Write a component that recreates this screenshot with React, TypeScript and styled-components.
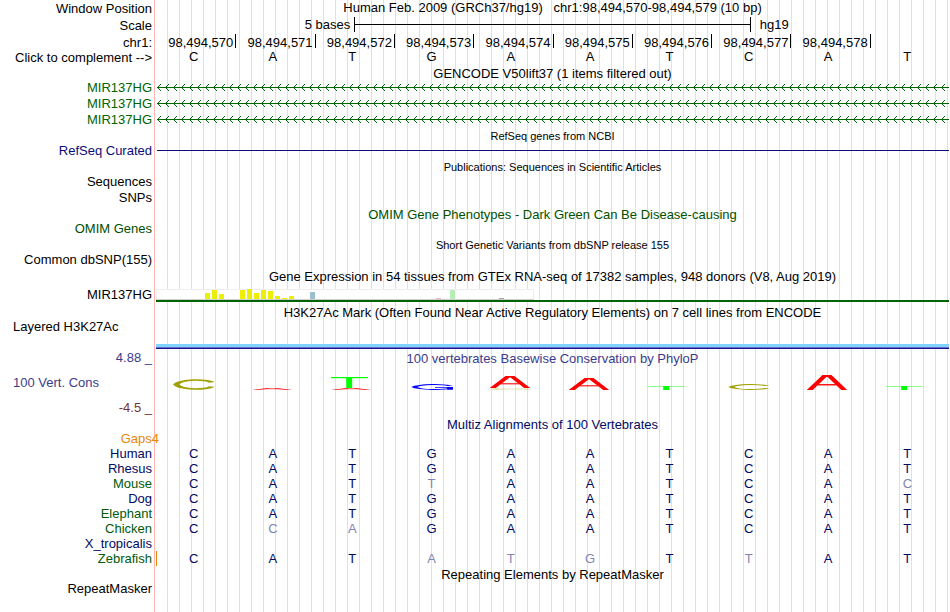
import React from "react";
import styled, { createGlobalStyle } from "styled-components";

const Colors = {
  text: "#000000",
  gencode: "#006400",
  refseq: "#0c0c78",
  omim: "#005000",
  phylop: "#3c3c8c",
  phylopLow: "#783228",
  multiz: "#000a64",
  multizAlt: "#005a0a",
  mismatch: "#8085b2",
  gaps: "#e6860a",
};

const bases = ["C", "A", "T", "G", "A", "A", "T", "C", "A", "T"];

const positions = [
  "98,494,570",
  "98,494,571",
  "98,494,572",
  "98,494,573",
  "98,494,574",
  "98,494,575",
  "98,494,576",
  "98,494,577",
  "98,494,578",
  "",
];

interface SpeciesType {
  name: string;
  seq: string;
  alt?: boolean;
  insert?: boolean;
}

const species: SpeciesType[] = [
  { name: "Human", seq: "CATGAATCAT" },
  { name: "Rhesus", seq: "CATGAATCAT" },
  { name: "Mouse", seq: "CATTAATCAC", alt: true },
  { name: "Dog", seq: "CATGAATCAT" },
  { name: "Elephant", seq: "CATGAATCAT", alt: true },
  { name: "Chicken", seq: "CCAGAATCAT", alt: true },
  { name: "X_tropicalis", seq: "          " },
  { name: "Zebrafish", seq: "CATATGTTAT", alt: true, insert: true },
];

// slot is the tissue index, every tissue takes 7px of the graph
const tissues = [
  { slot: 7, value: 6, color: "#eeee00" },
  { slot: 8, value: 9, color: "#eeee00" },
  { slot: 9, value: 5, color: "#eeee00" },
  { slot: 12, value: 9, color: "#eeee00" },
  { slot: 13, value: 10, color: "#eeee00" },
  { slot: 14, value: 6, color: "#eeee00" },
  { slot: 15, value: 9, color: "#eeee00" },
  { slot: 16, value: 8, color: "#eeee00" },
  { slot: 17, value: 3, color: "#eeee00" },
  { slot: 18, value: 1, color: "#eeee00" },
  { slot: 19, value: 3, color: "#eeee00" },
  { slot: 22, value: 7, color: "#9ac0cd" },
  { slot: 40, value: 1, color: "#eeb4b4" },
  { slot: 42, value: 9, color: "#b4eeb4" },
  { slot: 49, value: 1, color: "#a6a6a6" },
];

interface LogoPartType {
  base: string;
  top: number;
  height: number;
  faint?: boolean;
}

const logo: LogoPartType[][] = [
  [{ base: "C", top: 4, height: 11 }],
  [{ base: "A", top: 13, height: 2 }],
  [
    { base: "T", top: 2, height: 11 },
    { base: "A", top: 13, height: 2 },
  ],
  [{ base: "G", top: 9, height: 6 }],
  [
    { base: "C", top: 13, height: 2, faint: true },
    { base: "A", top: 1, height: 12 },
  ],
  [{ base: "A", top: 3, height: 12 }],
  [{ base: "T", top: 11, height: 4 }],
  [{ base: "C", top: 9, height: 6 }],
  [{ base: "A", top: 0, height: 15 }],
  [{ base: "T", top: 11, height: 4 }],
];

const LogoMark: React.FC<LogoPartType> = ({ base, top, height, faint }) => (
  <svg
    y={top}
    width="42"
    height={height}
    viewBox="0 0 105 100"
    preserveAspectRatio="none"
    opacity={faint ? 0.5 : 1}
  >
    {base === "A" && (
      <g stroke="#ff0000" fill="none">
        <path d="M6 102 L44 6 H56 L94 102" strokeWidth="14" />
        <line x1="26" y1="65" x2="74" y2="65" strokeWidth="9" />
      </g>
    )}
    {base === "C" && (
      <path
        d="M97 30 C84 0 20 -2 8 50 C20 102 84 100 97 68"
        stroke="#a0a000"
        strokeWidth="15"
        fill="none"
      />
    )}
    {base === "G" && (
      <g stroke="#0000ff" fill="none" strokeWidth="15">
        <path d="M98 30 C84 0 20 -2 8 50 C20 102 88 100 100 68" />
        <path d="M60 56 H98 V96" />
      </g>
    )}
    {base === "T" && (
      <g fill="#00ff00">
        <rect x="0" y="0" width="92" height="11" />
        <rect x="38" y="0" width="15" height="100" />
      </g>
    )}
  </svg>
);

const StrandLine: React.FC<{ id: string }> = ({ id }) => (
  <StrandSvg aria-hidden="true">
    <defs>
      <pattern id={id} x="1" y="0" width="8" height="16" patternUnits="userSpaceOnUse">
        <path d="M4 4 L0.5 7.5 L4 11" stroke={Colors.gencode} strokeWidth="1" fill="none" />
      </pattern>
    </defs>
    <rect x="1" y="0" width="100%" height="16" fill={`url(#${id})`} />
    <rect x="1" y="7" width="100%" height="1" fill={Colors.gencode} />
  </StrandSvg>
);

const App: React.FC = () => {
  return (
    <>
      <GlobalStyle />
      <Browser>
        <Row $height={17}>
          <Label>Window Position</Label>
          <Heading>{"Human Feb. 2009 (GRCh37/hg19)   chr1:98,494,570-98,494,579 (10 bp)"}</Heading>
        </Row>
        <Row $height={17}>
          <Label>Scale</Label>
          <ScaleTrack>
            <ScaleText $right>5 bases</ScaleText>
            <ScaleBar />
            <ScaleText>hg19</ScaleText>
          </ScaleTrack>
        </Row>
        <Row $height={17}>
          <Label>chr1:</Label>
          <BaseGrid>
            {positions.map((position, i) => (
              <Position key={i}>{position}</Position>
            ))}
          </BaseGrid>
        </Row>
        <Row $height={14}>
          <ComplementButton type="button">{"Click to complement -->"}</ComplementButton>
          <BaseGrid>
            {bases.map((base, i) => (
              <Base key={i}>{base}</Base>
            ))}
          </BaseGrid>
        </Row>

        <Row $height={15}>
          <span />
          <Title>GENCODE V50lift37 (1 items filtered out)</Title>
        </Row>
        {["gencode1", "gencode2", "gencode3"].map((id) => (
          <Row $height={16} key={id}>
            <Label $color={Colors.gencode}>MIR137HG</Label>
            <StrandLine id={id} />
          </Row>
        ))}

        <Row $height={15}>
          <span />
          <Title $small>RefSeq genes from NCBI</Title>
        </Row>
        <Row $height={16}>
          <Label $color={Colors.refseq}>RefSeq Curated</Label>
          <RefSeqLine />
        </Row>

        <Row $height={15}>
          <span />
          <Title $small>Publications: Sequences in Scientific Articles</Title>
        </Row>
        <Row $height={16}>
          <Label>Sequences</Label>
        </Row>
        <Row $height={16}>
          <Label>SNPs</Label>
        </Row>

        <Row $height={15}>
          <span />
          <Title $color={Colors.omim}>OMIM Gene Phenotypes - Dark Green Can Be Disease-causing</Title>
        </Row>
        <Row $height={16}>
          <Label $color={Colors.omim}>OMIM Genes</Label>
        </Row>

        <Row $height={15}>
          <span />
          <Title $small>Short Genetic Variants from dbSNP release 155</Title>
        </Row>
        <Row $height={16}>
          <Label>Common dbSNP(155)</Label>
        </Row>

        <Row $height={18}>
          <span />
          <Title>Gene Expression in 54 tissues from GTEx RNA-seq of 17382 samples, 948 donors (V8, Aug 2019)</Title>
        </Row>
        <Row $height={18}>
          <Label>MIR137HG</Label>
          <GtexTrack>
            <GtexGraph role="img" aria-label="MIR137HG expression">
              <rect x="0" y="0" width="378" height="11" fill="#ededed" />
              <rect x="1" y="1" width="376" height="9" fill="#ffffff" />
              <rect x="0" y="10" width="378" height="1" fill="#cfcfcf" />
              {tissues.map(({ slot, value, color }) => (
                <rect key={slot} x={slot * 7} y={10 - value} width="5" height={value} fill={color} />
              ))}
            </GtexGraph>
            <GeneModel />
          </GtexTrack>
        </Row>

        <Row $height={15}>
          <span />
          <Title>H3K27Ac Mark (Often Found Near Active Regulatory Elements) on 7 cell lines from ENCODE</Title>
        </Row>
        <Row $height={31}>
          <SideLabel>Layered H3K27Ac</SideLabel>
          <SignalBand />
        </Row>

        <Row $height={66}>
          <ConsLabels>
            <Label $color={Colors.phylop}>4.88 _</Label>
            <SideLabel $color={Colors.phylop}>100 Vert. Cons</SideLabel>
            <Label $color={Colors.phylopLow}>-4.5 _</Label>
          </ConsLabels>
          <ConsTrack>
            <Title $color={Colors.phylop}>100 vertebrates Basewise Conservation by PhyloP</Title>
            <BaseGrid>
              {logo.map((parts, i) => (
                <LogoCell key={i}>
                  <svg width="42" height="15" overflow="visible" aria-hidden="true">
                    {parts.map((part) => (
                      <LogoMark key={part.base} {...part} />
                    ))}
                  </svg>
                </LogoCell>
              ))}
            </BaseGrid>
          </ConsTrack>
        </Row>

        <Row $height={15}>
          <span />
          <Title $color={Colors.multiz}>Multiz Alignments of 100 Vertebrates</Title>
        </Row>
        <Row $height={15}>
          <GapsLabel>Gaps4</GapsLabel>
        </Row>
        <Alignment>
          <tbody>
            {species.map(({ name, seq, alt, insert }) => (
              <tr key={name}>
                <SpeciesName scope="row" $alt={alt}>
                  {name}
                </SpeciesName>
                {seq.split("").map((base, i) => (
                  <AlignedBase key={i} $match={base === bases[i]} $insert={insert && i === 0}>
                    {base}
                  </AlignedBase>
                ))}
              </tr>
            ))}
          </tbody>
        </Alignment>

        <Row $height={15}>
          <span />
          <Title>Repeating Elements by RepeatMasker</Title>
        </Row>
        <Row $height={15}>
          <Label>RepeatMasker</Label>
        </Row>
      </Browser>
    </>
  );
};

const GlobalStyle = createGlobalStyle`
  body {
    margin: 0;
    background: #ffffff;
    font-family: "Liberation Sans", Arial, Helvetica, sans-serif;
    font-size: 13px;
    line-height: 16px;
    color: ${Colors.text};
  }
`;

/* red line closes the label column, guide lines repeat every 12px */
const Browser = styled.main`
  box-sizing: border-box;
  min-height: 100vh;
  padding-right: 1px;
  background:
    linear-gradient(#ffb4b4, #ffb4b4) 154px 0 / 1px 100% no-repeat,
    repeating-linear-gradient(to right, transparent 0 11px, #dcdcff 11px 12px) 156px 0 no-repeat;
`;

const Row = styled.div<{ $height: number }>`
  display: grid;
  grid-template-columns: 156px minmax(0, 1fr);
  height: ${({ $height }) => $height}px;
`;

const Label = styled.div<{ $color?: string }>`
  padding-right: 4px;
  text-align: right;
  align-self: center;
  white-space: nowrap;
  color: ${({ $color }) => $color || Colors.text};
`;

const SideLabel = styled(Label)`
  padding-left: 13px;
  text-align: left;
  align-self: start;
`;

const GapsLabel = styled(Label)`
  padding-right: 0;
  margin-right: -3px;
  color: ${Colors.gaps};
`;

const ComplementButton = styled.button`
  padding: 0 4px 0 0;
  border: 0;
  background: none;
  font: inherit;
  line-height: 14px;
  color: inherit;
  text-align: right;
  white-space: nowrap;
  cursor: pointer;
`;

const Title = styled.div<{ $color?: string; $small?: boolean }>`
  text-align: center;
  white-space: pre;
  font-size: ${({ $small }) => ($small ? 11 : 13)}px;
  line-height: ${({ $small }) => ($small ? 16 : 18)}px;
  color: ${({ $color }) => $color || Colors.text};
`;

const Heading = styled.div`
  text-align: center;
  white-space: pre;
`;

const ScaleTrack = styled.div`
  display: grid;
  grid-template-columns: 1fr 2fr 1fr;
  align-items: start;
`;

const ScaleText = styled.span<{ $right?: boolean }>`
  padding: ${({ $right }) => ($right ? "0 4px 0 0" : "0 0 0 9px")};
  text-align: ${({ $right }) => ($right ? "right" : "left")};
`;

const ScaleBar = styled.div`
  height: 15px;
  border: solid #000000;
  border-width: 0 1px;
  background: linear-gradient(#000000, #000000) 0 7px / 100% 1px no-repeat;
`;

const BaseGrid = styled.div`
  display: grid;
  grid-template-columns: repeat(10, minmax(0, 1fr));
`;

const Position = styled.span`
  height: 14px;
  padding-right: 2px;
  line-height: 18px;
  text-align: right;
  & + & {
    border-left: 1px solid #000000;
  }
`;

const Base = styled.span`
  padding-right: 4px;
  line-height: 12px;
  text-align: center;
`;

const StrandSvg = styled.svg`
  display: block;
  width: 100%;
  height: 16px;
`;

const RefSeqLine = styled.div`
  height: 1px;
  margin: 7px 0 0 1px;
  background: ${Colors.refseq};
`;

const GtexTrack = styled.div`
  display: flex;
  flex-direction: column;
  padding-top: 3px;
`;

const GtexGraph = styled.svg`
  display: block;
  width: 378px;
  height: 11px;
`;

const GeneModel = styled.div`
  height: 2px;
  background: ${Colors.gencode};
`;

const SignalBand = styled.div`
  align-self: end;
  height: 5px;
  margin-bottom: 1px;
  background: linear-gradient(#7fd4ff 0 3px, #6a6ac8 3px 4px, #14148c 4px 5px);
`;

const ConsLabels = styled.div`
  display: flex;
  flex-direction: column;
  justify-content: space-between;
  & > ${Label} {
    align-self: stretch;
  }
`;

const ConsTrack = styled.div`
  display: flex;
  flex-direction: column;
  gap: 7px;
`;

const LogoCell = styled.div`
  display: flex;
  justify-content: center;
  padding-right: 4px;
`;

const Alignment = styled.table`
  width: 100%;
  table-layout: fixed;
  border-spacing: 0;
  line-height: 15px;
`;

const SpeciesName = styled.th<{ $alt?: boolean }>`
  width: 152px;
  padding: 0 4px 0 0;
  font-weight: normal;
  text-align: right;
  color: ${({ $alt }) => ($alt ? Colors.multizAlt : Colors.multiz)};
`;

const AlignedBase = styled.td<{ $match: boolean; $insert?: boolean }>`
  padding: 0 4px 0 0;
  text-align: center;
  color: ${({ $match }) => ($match ? Colors.multiz : Colors.mismatch)};
  box-shadow: ${({ $insert }) => ($insert ? `inset 1px 0 ${Colors.gaps}` : "none")};
`;

export default App;
